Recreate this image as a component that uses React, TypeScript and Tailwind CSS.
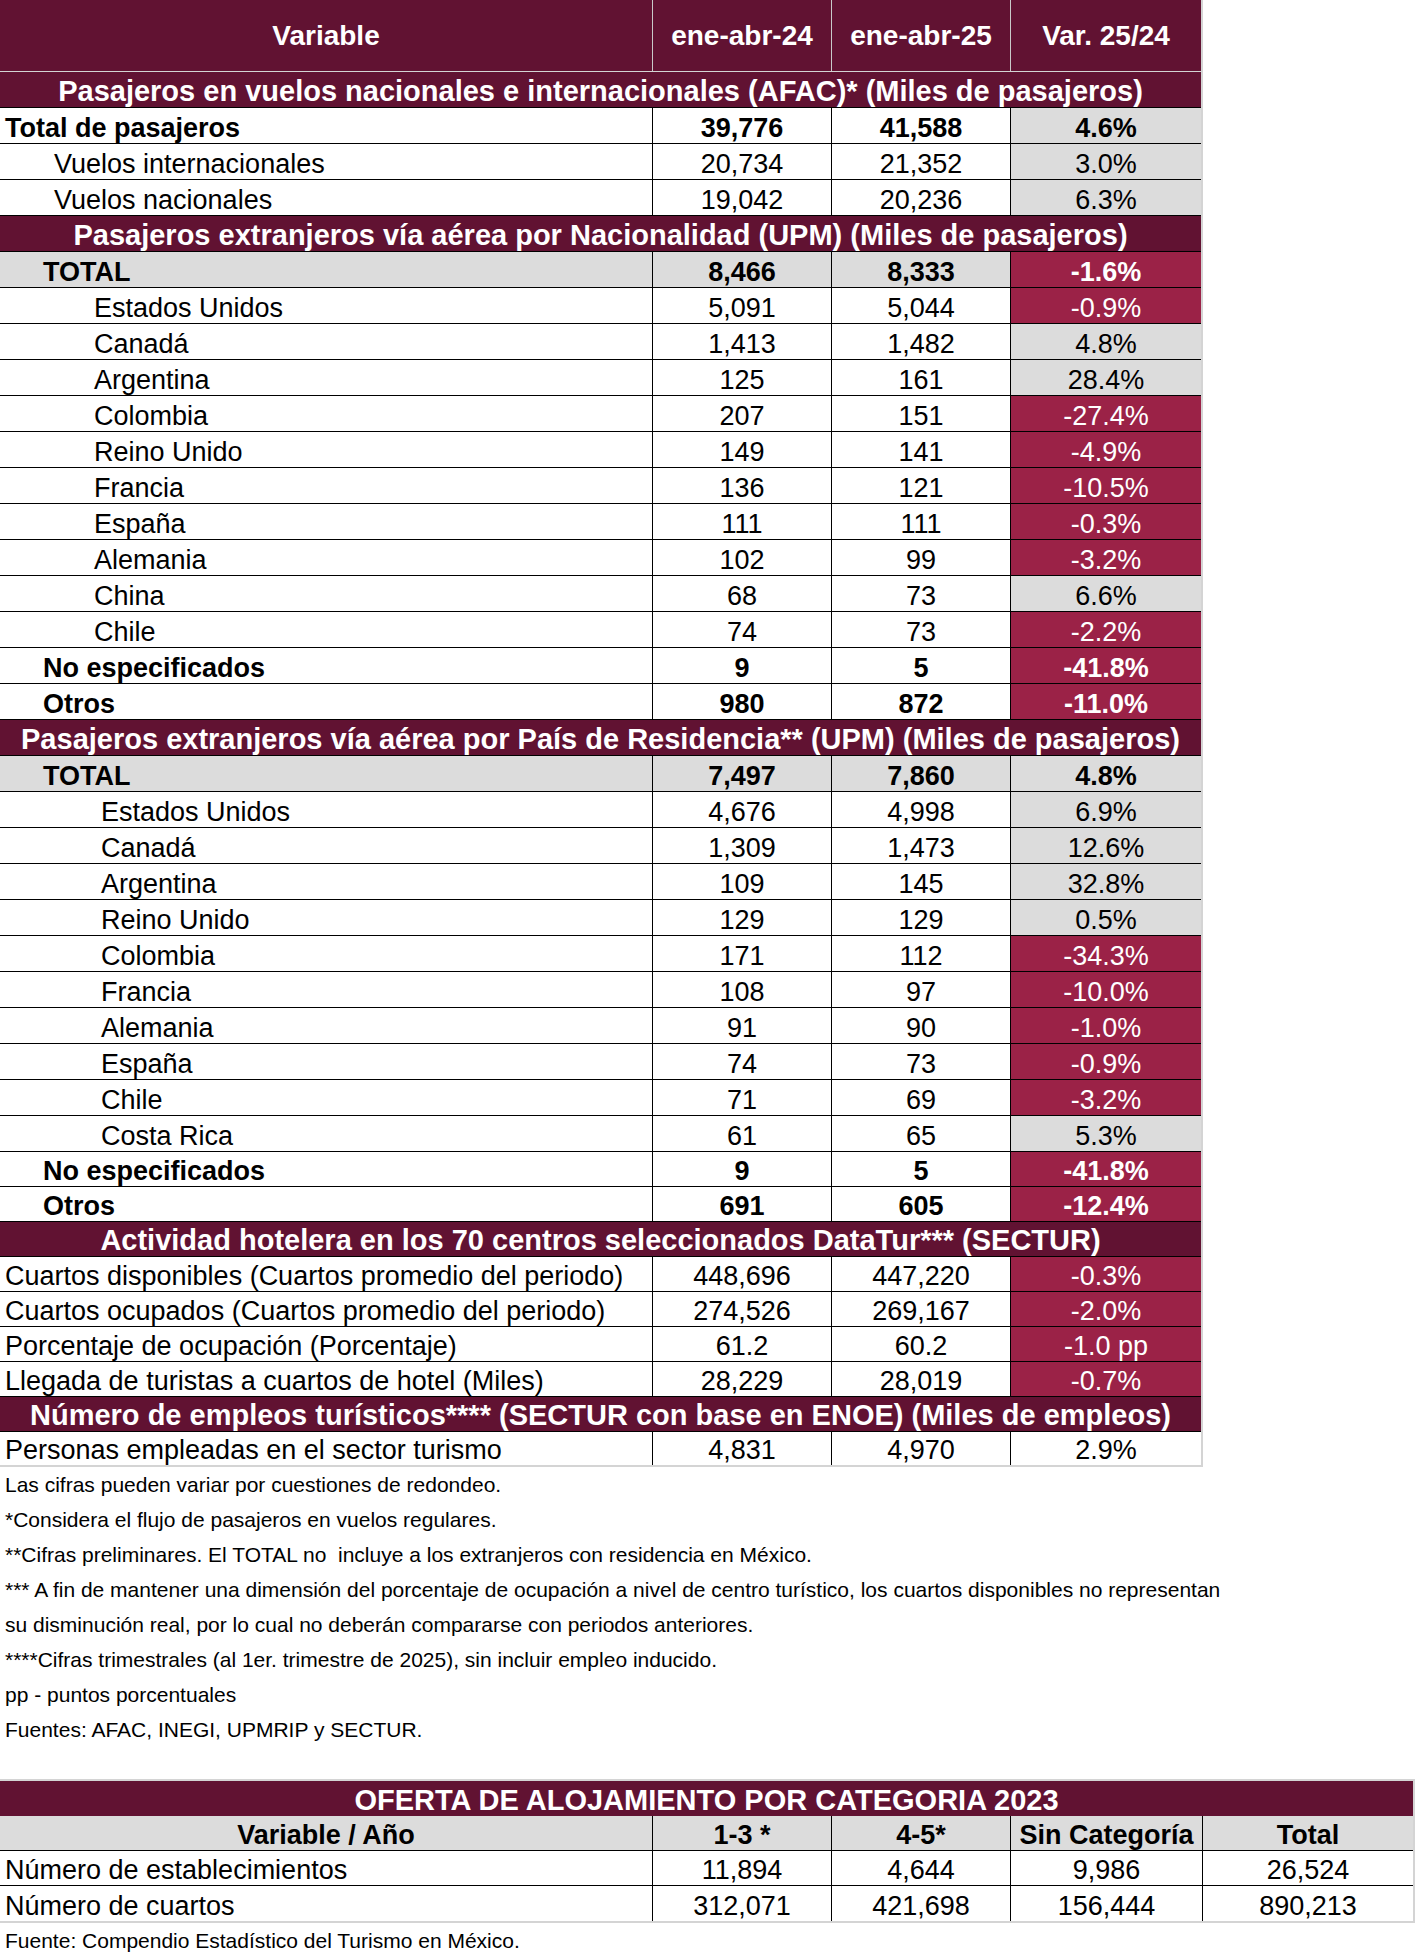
import React from "react";

type VarTone = "gray" | "neg" | "white";

type DataRow = {
  label: string;
  a: string;
  b: string;
  v: string;
  indent: string;
  bold?: boolean;
  rowGray?: boolean;
  tone: VarTone;
  h?: string;
};

type Section = {
  title: string;
  h?: string;
  rows: DataRow[];
};

const sections: Section[] = [
  {
    title: "Pasajeros en vuelos nacionales e internacionales (AFAC)* (Miles de pasajeros)",
    rows: [
      { label: "Total de pasajeros", a: "39,776", b: "41,588", v: "4.6%", indent: "pl-[5px]", bold: true, tone: "gray" },
      { label: "Vuelos internacionales", a: "20,734", b: "21,352", v: "3.0%", indent: "pl-[54px]", tone: "gray" },
      { label: "Vuelos nacionales", a: "19,042", b: "20,236", v: "6.3%", indent: "pl-[54px]", tone: "gray" },
    ],
  },
  {
    title: "Pasajeros extranjeros vía aérea por Nacionalidad (UPM) (Miles de pasajeros)",
    rows: [
      { label: "TOTAL", a: "8,466", b: "8,333", v: "-1.6%", indent: "pl-[43px]", bold: true, rowGray: true, tone: "neg" },
      { label: "Estados Unidos", a: "5,091", b: "5,044", v: "-0.9%", indent: "pl-[94px]", tone: "neg" },
      { label: "Canadá", a: "1,413", b: "1,482", v: "4.8%", indent: "pl-[94px]", tone: "gray" },
      { label: "Argentina", a: "125", b: "161", v: "28.4%", indent: "pl-[94px]", tone: "gray" },
      { label: "Colombia", a: "207", b: "151", v: "-27.4%", indent: "pl-[94px]", tone: "neg" },
      { label: "Reino Unido", a: "149", b: "141", v: "-4.9%", indent: "pl-[94px]", tone: "neg" },
      { label: "Francia", a: "136", b: "121", v: "-10.5%", indent: "pl-[94px]", tone: "neg" },
      { label: "España", a: "111", b: "111", v: "-0.3%", indent: "pl-[94px]", tone: "neg" },
      { label: "Alemania", a: "102", b: "99", v: "-3.2%", indent: "pl-[94px]", tone: "neg" },
      { label: "China", a: "68", b: "73", v: "6.6%", indent: "pl-[94px]", tone: "gray" },
      { label: "Chile", a: "74", b: "73", v: "-2.2%", indent: "pl-[94px]", tone: "neg" },
      { label: "No especificados", a: "9", b: "5", v: "-41.8%", indent: "pl-[43px]", bold: true, tone: "neg" },
      { label: "Otros", a: "980", b: "872", v: "-11.0%", indent: "pl-[43px]", bold: true, tone: "neg" },
    ],
  },
  {
    title: "Pasajeros extranjeros vía aérea por País de Residencia** (UPM) (Miles de pasajeros)",
    rows: [
      { label: "TOTAL", a: "7,497", b: "7,860", v: "4.8%", indent: "pl-[43px]", bold: true, rowGray: true, tone: "gray" },
      { label: "Estados Unidos", a: "4,676", b: "4,998", v: "6.9%", indent: "pl-[101px]", tone: "gray" },
      { label: "Canadá", a: "1,309", b: "1,473", v: "12.6%", indent: "pl-[101px]", tone: "gray" },
      { label: "Argentina", a: "109", b: "145", v: "32.8%", indent: "pl-[101px]", tone: "gray" },
      { label: "Reino Unido", a: "129", b: "129", v: "0.5%", indent: "pl-[101px]", tone: "gray" },
      { label: "Colombia", a: "171", b: "112", v: "-34.3%", indent: "pl-[101px]", tone: "neg" },
      { label: "Francia", a: "108", b: "97", v: "-10.0%", indent: "pl-[101px]", tone: "neg" },
      { label: "Alemania", a: "91", b: "90", v: "-1.0%", indent: "pl-[101px]", tone: "neg" },
      { label: "España", a: "74", b: "73", v: "-0.9%", indent: "pl-[101px]", tone: "neg" },
      { label: "Chile", a: "71", b: "69", v: "-3.2%", indent: "pl-[101px]", tone: "neg" },
      { label: "Costa Rica", a: "61", b: "65", v: "5.3%", indent: "pl-[101px]", tone: "gray" },
      { label: "No especificados", a: "9", b: "5", v: "-41.8%", indent: "pl-[43px]", bold: true, tone: "neg", h: "h-[35px]" },
      { label: "Otros", a: "691", b: "605", v: "-12.4%", indent: "pl-[43px]", bold: true, tone: "neg", h: "h-[35px]" },
    ],
  },
  {
    title: "Actividad hotelera en los 70 centros seleccionados DataTur*** (SECTUR)",
    h: "h-[35px]",
    rows: [
      { label: "Cuartos disponibles (Cuartos promedio del periodo)", a: "448,696", b: "447,220", v: "-0.3%", indent: "pl-[5px]", tone: "neg", h: "h-[35px]" },
      { label: "Cuartos ocupados (Cuartos promedio del periodo)", a: "274,526", b: "269,167", v: "-2.0%", indent: "pl-[5px]", tone: "neg", h: "h-[35px]" },
      { label: "Porcentaje de ocupación (Porcentaje)", a: "61.2", b: "60.2", v: "-1.0 pp", indent: "pl-[5px]", tone: "neg", h: "h-[35px]" },
      { label: "Llegada de turistas a cuartos de hotel (Miles)", a: "28,229", b: "28,019", v: "-0.7%", indent: "pl-[5px]", tone: "neg", h: "h-[35px]" },
    ],
  },
  {
    title: "Número de empleos turísticos**** (SECTUR con base en ENOE) (Miles de empleos)",
    h: "h-[35px]",
    rows: [
      { label: "Personas empleadas en el sector turismo", a: "4,831", b: "4,970", v: "2.9%", indent: "pl-[5px]", tone: "white", h: "h-[35px]" },
    ],
  },
];

const notes = [
  "Las cifras pueden variar por cuestiones de redondeo.",
  "*Considera el flujo de pasajeros en vuelos regulares.",
  "**Cifras preliminares. El TOTAL no\u00a0 incluye a los extranjeros con residencia en México.",
  "*** A fin de mantener una dimensión del porcentaje de ocupación a nivel de centro turístico, los cuartos disponibles no representan",
  "su disminución real, por lo cual no deberán compararse con periodos anteriores.",
  "****Cifras trimestrales (al 1er. trimestre de 2025), sin incluir empleo inducido.",
  "pp - puntos porcentuales",
  "Fuentes: AFAC, INEGI, UPMRIP y SECTUR.",
];

const toneClass: Record<VarTone, string> = {
  gray: "bg-[#dcdcdc] text-black",
  neg: "bg-[#9b2247] text-white",
  white: "bg-white text-black",
};

function Row({ r, last }: { r: DataRow; last: boolean }) {
  const base = r.rowGray ? "bg-[#dcdcdc]" : "bg-white";
  return (
    <div
      className={`flex ${r.h ?? "h-[36px]"} border-b ${last ? "border-[#d4d4d4] border-b-2" : "border-black"} ${r.bold ? "font-bold" : ""}`}
    >
      <div className={`w-[652px] flex items-end pb-[1px] leading-none ${base} ${r.indent}`}>{r.label}</div>
      <div className={`w-[179px] flex items-end justify-center pb-[1px] leading-none border-l border-black ${base}`}>{r.a}</div>
      <div className={`w-[179px] flex items-end justify-center pb-[1px] leading-none border-l border-black ${base}`}>{r.b}</div>
      <div className={`w-[191px] flex items-end justify-center pb-[1px] leading-none border-l border-black ${toneClass[r.tone]}`}>{r.v}</div>
    </div>
  );
}

export default function App() {
  return (
    <div className="w-[1415px] bg-white text-black text-[27px] font-['Liberation_Sans',Arial,sans-serif]">
      {/* main table */}
      <div className="w-[1203px] border-r-2 border-[#d4d4d4]">
        <div className="flex h-[72px] bg-[#611232] text-white text-[28px] font-bold border-b border-[#d4d4d4]">
          <div className="w-[652px] flex items-center justify-center">Variable</div>
          <div className="w-[179px] flex items-center justify-center border-l border-[#c9c9c9]">ene-abr-24</div>
          <div className="w-[179px] flex items-center justify-center border-l border-[#c9c9c9]">ene-abr-25</div>
          <div className="w-[191px] flex items-center justify-center border-l border-[#c9c9c9]">Var. 25/24</div>
        </div>
        {sections.map((s, si) => (
          <div key={si}>
            <div
              className={`${s.h ?? "h-[36px]"} bg-[#611232] text-white text-[29px] font-bold flex items-end justify-center pb-[1px] leading-none border-b border-black whitespace-nowrap`}
            >
              {s.title}
            </div>
            {s.rows.map((r, ri) => (
              <Row key={ri} r={r} last={si === sections.length - 1 && ri === s.rows.length - 1} />
            ))}
          </div>
        ))}
      </div>

      {/* notes */}
      <div className="text-[21px] leading-[35px] pl-[5px] whitespace-nowrap">
        {notes.map((n, i) => (
          <div key={i}>{n}</div>
        ))}
      </div>

      {/* oferta de alojamiento */}
      <div className="mt-[32px] w-[1415px] border-2 border-[#d4d4d4] border-l-0">
        <div className="h-[35px] bg-[#611232] text-white text-[29px] font-bold flex items-end justify-center pb-[1px] leading-none">
          OFERTA DE ALOJAMIENTO POR CATEGORIA 2023
        </div>
        <div className="flex h-[35px] bg-[#dcdcdc] font-bold border-b border-black">
          <div className="w-[652px] flex items-end justify-center pb-[1px] leading-none">Variable / Año</div>
          <div className="w-[179px] flex items-end justify-center pb-[1px] leading-none border-l border-black">1-3 *</div>
          <div className="w-[179px] flex items-end justify-center pb-[1px] leading-none border-l border-black">4-5*</div>
          <div className="w-[192px] flex items-end justify-center pb-[1px] leading-none border-l border-black">Sin Categoría</div>
          <div className="flex-1 flex items-end justify-center pb-[1px] leading-none border-l border-black">Total</div>
        </div>
        <div className="flex h-[35px] border-b border-black">
          <div className="w-[652px] flex items-end pl-[5px] pb-[1px] leading-none">Número de establecimientos</div>
          <div className="w-[179px] flex items-end justify-center pb-[1px] leading-none border-l border-black">11,894</div>
          <div className="w-[179px] flex items-end justify-center pb-[1px] leading-none border-l border-black">4,644</div>
          <div className="w-[192px] flex items-end justify-center pb-[1px] leading-none border-l border-black">9,986</div>
          <div className="flex-1 flex items-end justify-center pb-[1px] leading-none border-l border-black">26,524</div>
        </div>
        <div className="flex h-[35px]">
          <div className="w-[652px] flex items-end pl-[5px] pb-[1px] leading-none">Número de cuartos</div>
          <div className="w-[179px] flex items-end justify-center pb-[1px] leading-none border-l border-black">312,071</div>
          <div className="w-[179px] flex items-end justify-center pb-[1px] leading-none border-l border-black">421,698</div>
          <div className="w-[192px] flex items-end justify-center pb-[1px] leading-none border-l border-black">156,444</div>
          <div className="flex-1 flex items-end justify-center pb-[1px] leading-none border-l border-black">890,213</div>
        </div>
      </div>
      <div className="text-[21px] leading-[35px] pl-[5px]">Fuente: Compendio Estadístico del Turismo en México.</div>
    </div>
  );
}
